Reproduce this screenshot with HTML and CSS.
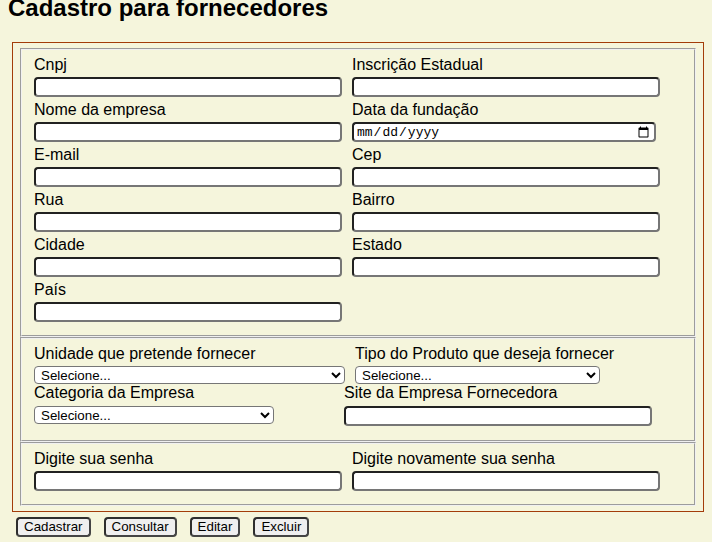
FILE: index.html
```html
<!DOCTYPE html>
<html lang="pt-BR">
<head>
<meta charset="utf-8">
<title>Cadastro para fornecedores</title>
<link rel="stylesheet" href="styles.css">
</head>
<body>
<h2 class="title">Cadastro para fornecedores</h2>
<form class="form">
  <fieldset class="outer">
    <fieldset class="group group-main">
      <div class="grid">
        <div class="field"><label class="lbl">Cnpj</label><input class="txt" type="text"></div>
        <div class="field"><label class="lbl">Inscrição Estadual</label><input class="txt" type="text"></div>
        <div class="field"><label class="lbl">Nome da empresa</label><input class="txt" type="text"></div>
        <div class="field"><label class="lbl">Data da fundação</label><input class="txt date" type="date"></div>
        <div class="field"><label class="lbl">E-mail</label><input class="txt" type="text"></div>
        <div class="field"><label class="lbl">Cep</label><input class="txt" type="text"></div>
        <div class="field"><label class="lbl">Rua</label><input class="txt" type="text"></div>
        <div class="field"><label class="lbl">Bairro</label><input class="txt" type="text"></div>
        <div class="field"><label class="lbl">Cidade</label><input class="txt" type="text"></div>
        <div class="field"><label class="lbl">Estado</label><input class="txt" type="text"></div>
        <div class="field"><label class="lbl">País</label><input class="txt" type="text"></div>
      </div>
    </fieldset>
    <fieldset class="group group-prod">
      <div class="row row-a">
        <div class="col col-a1"><label class="lbl">Unidade que pretende fornecer</label><select class="sel sel-unid"><option>Selecione...</option></select></div>
        <div class="col"><label class="lbl">Tipo do Produto que deseja fornecer</label><select class="sel sel-tipo"><option>Selecione...</option></select></div>
      </div>
      <div class="row row-b">
        <div class="col col-b1"><label class="lbl">Categoria da Empresa</label><select class="sel sel-cat"><option>Selecione...</option></select></div>
        <div class="col"><label class="lbl">Site da Empresa Fornecedora</label><input class="txt" type="text"></div>
      </div>
    </fieldset>
    <fieldset class="group group-pass">
      <div class="grid">
        <div class="field"><label class="lbl">Digite sua senha</label><input class="txt" type="password"></div>
        <div class="field"><label class="lbl">Digite novamente sua senha</label><input class="txt" type="password"></div>
      </div>
    </fieldset>
  </fieldset>
  <div class="actions">
    <button class="btn" type="button">Cadastrar</button>
    <button class="btn" type="button">Consultar</button>
    <button class="btn" type="button">Editar</button>
    <button class="btn" type="button">Excluir</button>
  </div>
</form>
</body>
</html>
```
FILE: styles.css
```css
html, body {
  background: #f5f5dc;
}
body {
  margin: 0;
  font-family: "Liberation Sans", Arial, sans-serif;
  font-size: 16px;
  color: #000;
}
.title {
  margin: -6px 0 21px 8px;
  font-size: 24px;
  line-height: 27px;
  font-weight: bold;
}
.form {
  margin: 0;
}
.outer {
  margin: 0 0 0 12px;
  width: 692px;
  box-sizing: border-box;
  padding: 5px 7px;
  border: 1px solid #a33c0a;
  min-inline-size: 0;
}
.group {
  margin: 0;
  padding: 6px 12px 10px;
  border: 2px groove #f0f0f0;
  min-inline-size: 0;
}
.group-main {
  padding-bottom: 9px;
}
.grid {
  display: grid;
  grid-template-columns: 318px 1fr;
}
.field {
  display: flex;
  flex-direction: column;
  align-items: flex-start;
  padding-bottom: 4px;
}
.group-pass .field {
  padding-bottom: 3px;
}
.lbl {
  display: block;
  height: 18px;
  line-height: 18px;
  white-space: nowrap;
}
.txt {
  box-sizing: border-box;
  width: 308px;
  height: 20px;
  margin: 3px 0 0;
  padding: 1px 3px;
  border: 2px inset #767676;
  border-radius: 4px;
  background: #fff;
  font-family: "Liberation Sans", Arial, sans-serif;
  font-size: 13.333px;
}
.date {
  width: 304px;
  font-family: "Liberation Mono", "DejaVu Sans Mono", monospace;
  font-size: 13px;
  padding: 0 2px;
}
.row {
  display: flex;
}
.col {
  display: flex;
  flex-direction: column;
  align-items: flex-start;
}
.col-a1 {
  width: 321px;
}
.col-b1 {
  width: 310px;
}
.row-b {
  padding-bottom: 4px;
}
.row-b .sel,
.row-b .txt {
  margin-top: 4px;
}
.sel {
  box-sizing: border-box;
  height: 18px;
  margin: 3px 0 0;
  padding: 0 2px;
  border: 1px solid #767676;
  border-radius: 4px;
  background: #fff;
  font-family: "Liberation Sans", Arial, sans-serif;
  font-size: 13.333px;
}
.sel-unid {
  width: 311px;
}
.sel-tipo {
  width: 245px;
}
.sel-cat {
  width: 240px;
}
.actions {
  display: flex;
  gap: 13px;
  margin: 5px 0 0 16px;
}
.btn {
  box-sizing: border-box;
  height: 20px;
  margin: 0;
  padding: 0 6px;
  border: 2px solid #2e2e2e;
  border-bottom-color: #444;
  border-right-color: #444;
  border-radius: 4px;
  background: #efefef;
  color: #000;
  font-family: "Liberation Sans", Arial, sans-serif;
  font-size: 13.333px;
  line-height: 16px;
}
```
